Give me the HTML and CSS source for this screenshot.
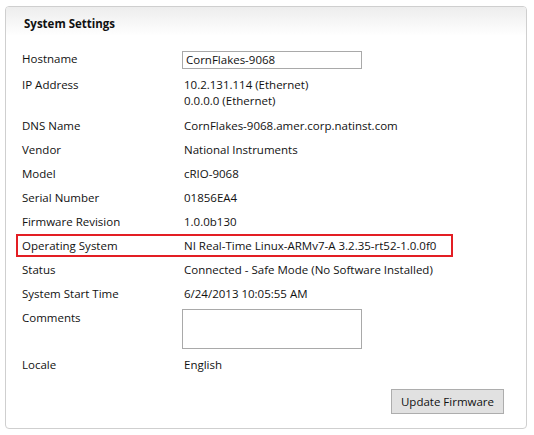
FILE: index.html
```html
<!DOCTYPE html>
<html>
<head>
<meta charset="utf-8">
<link rel="stylesheet" href="styles.css">
</head>
<body>
<div class="panel">
  <div class="panel-header">System Settings</div>
  <div class="panel-body">
    <div class="row">
      <div class="label">Hostname</div>
      <div class="value"><div class="input">CornFlakes-9068</div></div>
    </div>
    <div class="row">
      <div class="label">IP Address</div>
      <div class="value ip">10.2.131.114 (Ethernet)<br>0.0.0.0 (Ethernet)</div>
    </div>
    <div class="row">
      <div class="label">DNS Name</div>
      <div class="value">CornFlakes-9068.amer.corp.natinst.com</div>
    </div>
    <div class="row">
      <div class="label">Vendor</div>
      <div class="value">National Instruments</div>
    </div>
    <div class="row">
      <div class="label">Model</div>
      <div class="value">cRIO-9068</div>
    </div>
    <div class="row">
      <div class="label">Serial Number</div>
      <div class="value">01856EA4</div>
    </div>
    <div class="row">
      <div class="label">Firmware Revision</div>
      <div class="value">1.0.0b130</div>
    </div>
    <div class="row highlighted">
      <div class="label">Operating System</div>
      <div class="value">NI Real-Time Linux-ARMv7-A 3.2.35-rt52-1.0.0f0</div>
      <div class="highlight-box"></div>
    </div>
    <div class="row">
      <div class="label">Status</div>
      <div class="value">Connected - Safe Mode (No Software Installed)</div>
    </div>
    <div class="row">
      <div class="label">System Start Time</div>
      <div class="value">6/24/2013 10:05:55 AM</div>
    </div>
    <div class="row">
      <div class="label">Comments</div>
      <div class="value"><div class="textarea"></div></div>
    </div>
    <div class="row">
      <div class="label">Locale</div>
      <div class="value">English</div>
    </div>
    <div class="actions">
      <button class="btn">Update Firmware</button>
    </div>
  </div>
</div>
</body>
</html>
```
FILE: styles.css
```css
html, body {
  margin: 0;
  padding: 0;
  background: #ffffff;
}
body {
  padding: 6px 7px 0 5px;
  font-family: "Open Sans", "Noto Sans", "DejaVu Sans", sans-serif;
  font-size: 11.5px;
  color: #111111;
}
.panel {
  width: 522px;
  height: 423px;
  box-sizing: border-box;
  border: 1px solid #cfcfcf;
  border-radius: 4px;
  overflow: hidden;
}
.panel-header {
  height: 29px;
  line-height: 34px;
  padding-left: 18px;
  font-weight: bold;
  background: linear-gradient(#ededed, #ffffff);
  box-sizing: border-box;
}
.panel-body {
  padding: 15px 0 0 16px;
  display: flex;
  flex-direction: column;
  gap: 8px;
}
.row {
  display: flex;
  line-height: 16px;
  position: relative;
}
.label {
  width: 162px;
  flex: none;
}
.value {
  flex: 1;
}
.ip {
  padding-bottom: 1px;
}
.input {
  width: 180px;
  height: 18px;
  margin-left: -2px;
  box-sizing: border-box;
  border: 1px solid #a9a9a9;
  padding-left: 3px;
  line-height: 16px;
}
.textarea {
  width: 180px;
  height: 40px;
  margin-left: -2px;
  margin-top: -1px;
  box-sizing: border-box;
  border: 1px solid #a9a9a9;
}
.highlight-box {
  position: absolute;
  left: -6px;
  top: -4px;
  width: 437px;
  height: 23px;
  box-sizing: border-box;
  border: 2px solid #e31e24;
}
.actions {
  display: flex;
  justify-content: flex-end;
  padding-right: 22px;
  margin-top: 8px;
}
.btn {
  width: 113px;
  height: 25px;
  font-family: inherit;
  font-size: 11.5px;
  color: #111111;
  background: #e1e1e1;
  border: 1px solid #adadad;
  border-radius: 0;
  padding: 0;
}
```
